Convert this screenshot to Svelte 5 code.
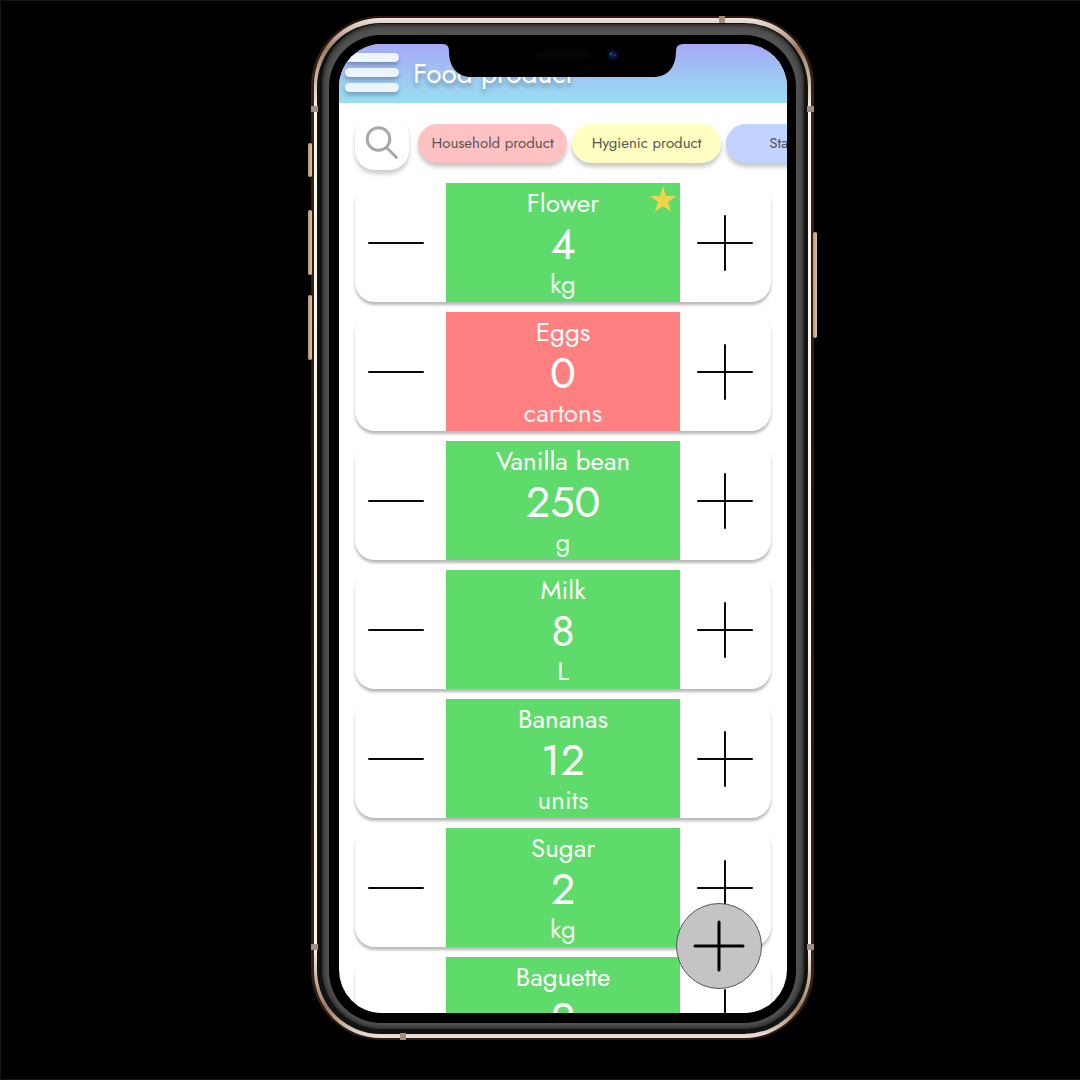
<script>
  let products = $state([
    { name: 'Flower', amount: 4, unit: 'kg', starred: true },
    { name: 'Eggs', amount: 0, unit: 'cartons' },
    { name: 'Vanilla bean', amount: 250, unit: 'g' },
    { name: 'Milk', amount: 8, unit: 'L' },
    { name: 'Bananas', amount: 12, unit: 'units' },
    { name: 'Sugar', amount: 2, unit: 'kg' },
    { name: 'Baguette', amount: 2, unit: 'units' }
  ]);

  const categories = [
    { label: 'Household product', tone: 'pink' },
    { label: 'Hygienic product', tone: 'yellow' },
    { label: 'Stationery', tone: 'blue' }
  ];
</script>

<div class="page">
  <div class="phone">
    <span class="key mute"></span>
    <span class="key up"></span>
    <span class="key down"></span>
    <span class="key power"></span>
    <div class="rim">
      <div class="edge">
        <div class="band">
          <div class="bezel">
            <main class="screen">
              <header>
                <button class="menu" aria-label="Menu"><i></i><i></i><i></i></button>
                <h1>Food product</h1>
              </header>

              <nav>
                <button class="search" aria-label="Search">
                  <svg width="36" height="36" viewBox="0 0 36 36">
                    <circle cx="14.5" cy="14" r="11.3" />
                    <path d="M22.5 22.5L32.5 32.5" />
                  </svg>
                </button>
                {#each categories as category}
                  <a href="#category" class="pill {category.tone}">{category.label}</a>
                {/each}
              </nav>

              <ul>
                {#each products as product}
                  <li>
                    <button
                      class="step minus"
                      aria-label="Remove one {product.name}"
                      onclick={() => (product.amount = Math.max(0, product.amount - 1))}
                    >
                      <svg width="58" height="58" viewBox="0 0 58 58"><path d="M2 29H56" /></svg>
                    </button>
                    <div class="info" class:empty={product.amount === 0}>
                      <h2>{product.name}</h2>
                      <strong>{product.amount}</strong>
                      <span class="unit">{product.unit}</span>
                      {#if product.starred}
                        <svg class="star" width="28" height="27" viewBox="0 0 28 27">
                          <path d="M14 0L17.1 10H27.3L19.1 16.1L22.2 26L14 19.9L5.8 26L8.9 16.1L0.7 10H10.9Z" />
                        </svg>
                      {/if}
                    </div>
                    <button class="step plus" aria-label="Add one {product.name}" onclick={() => product.amount++}>
                      <svg width="58" height="58" viewBox="0 0 58 58"><path d="M2 29H56M29 2V56" /></svg>
                    </button>
                  </li>
                {/each}
              </ul>

              <button class="add" aria-label="Add product">
                <svg width="54" height="54" viewBox="0 0 54 54"><path d="M3 27H51M27 3V51" /></svg>
              </button>

              <svg class="notch" width="240" height="34" viewBox="0 0 240 34">
                <path d="M0 0H240Q233 0 233 7C233 23 225 33 210 33H29C14 33 6 23 6 7Q6 0 0 0Z" />
                <rect class="speaker" x="93" y="7" width="54" height="8" rx="4" />
                <circle class="lens" cx="170" cy="11" r="6" />
                <circle class="glass" cx="169.5" cy="11" r="4" />
                <circle class="glint" cx="168" cy="10" r="1.5" />
                <circle class="glint" cx="171.5" cy="11" r="1" />
              </svg>
            </main>
          </div>
        </div>
      </div>
    </div>
    <span class="seam left high"></span>
    <span class="seam left low"></span>
    <span class="seam right high"></span>
    <span class="seam right low"></span>
    <span class="seam top"></span>
    <span class="seam bottom"></span>
  </div>
</div>

<style>
  :global(body) {
    background: #000;
  }

  * {
    box-sizing: border-box;
    margin: 0;
  }

  button {
    padding: 0;
    border: 0;
    background: none;
    font: inherit;
    cursor: pointer;
  }

  svg {
    display: block;
    fill: none;
    stroke-linecap: round;
  }

  .page {
    display: flex;
    justify-content: center;
    height: 100vh;
    padding: 15px 0 39px 44px;
    border: 1px solid #151515;
    border-right: 0;
    background: #000;
    font-family: Jost, Futura, Lato, sans-serif;
  }

  .phone {
    position: relative;
    display: flex;
    width: 100%;
    max-width: 503px;
    padding: 2px 3px;
    border-radius: 70px;
    background: linear-gradient(#2b1a0e, #3a2212 6%, #2b170b 50%, #3a2212 94%, #2b1a0e);
  }

  .rim,
  .edge,
  .band,
  .bezel {
    display: flex;
    flex: 1;
    min-width: 0;
  }

  .rim {
    padding: 5px 3px 4px;
    border-radius: 67px;
    background: linear-gradient(#f0e4de, #9c7b66 3%, #fff5ef 9%, #fff5ef 91%, #9c7b66 97%, #f0e4de);
  }

  .edge {
    padding: 1px 4px 5px 5px;
    border-radius: 64px;
    background: #111212;
  }

  .band {
    padding: 11px 8px 6px 7px;
    border-radius: 60px;
    background: #525252;
    box-shadow: inset 0 0 5px 1px #1c1c1c;
  }

  .bezel {
    padding: 9px 9px 10px 10px;
    border-radius: 52px;
    background: #000;
  }

  .screen {
    position: relative;
    display: flex;
    flex: 1;
    flex-direction: column;
    min-width: 0;
    overflow: hidden;
    border-radius: 43px;
    background: #fff;
  }

  header {
    display: flex;
    flex: none;
    gap: 14px;
    align-items: flex-start;
    padding: 9px 6px 8px;
    background: linear-gradient(#a6a9f7, #97dff0);
  }

  .menu {
    display: grid;
    flex: none;
    gap: 6px;
    width: 54px;
  }

  .menu i {
    height: 9px;
    border-radius: 5px;
    background: #eef4fd;
    box-shadow: 0 3px 4px rgba(0, 0, 0, 0.25);
  }

  h1 {
    color: #fff;
    font-size: 28px;
    font-weight: 400;
    line-height: 42px;
    white-space: nowrap;
    text-shadow: 0 4px 4px rgba(0, 0, 0, 0.25);
  }

  nav {
    display: flex;
    flex: none;
    gap: 5px;
    align-items: center;
    padding: 13px 0 13px 16px;
    overflow: hidden;
  }

  .search {
    display: flex;
    flex: none;
    align-items: center;
    justify-content: center;
    width: 54px;
    height: 54px;
    margin-right: 4px;
    border-radius: 20px;
    background: #fff;
    box-shadow: 0 4px 4px rgba(0, 0, 0, 0.2);
  }

  .search path,
  .search circle {
    stroke: #a9a9a9;
    stroke-width: 3;
  }

  .pill {
    flex: none;
    width: 149px;
    border-radius: 20px;
    color: #555;
    font-size: 15px;
    line-height: 39px;
    text-align: center;
    text-decoration: none;
    box-shadow: 0 4px 4px rgba(0, 0, 0, 0.22);
  }

  .pink {
    background: #ffc1c2;
  }

  .yellow {
    background: #feffc1;
  }

  .blue {
    background: #c2d3ff;
  }

  ul {
    display: flex;
    flex: 1;
    flex-direction: column;
    gap: 10px;
    min-height: 0;
    padding: 0 16px;
    overflow: hidden;
    list-style: none;
  }

  li {
    display: flex;
    flex: none;
    border-radius: 20px;
    background: #fff;
    box-shadow: 0 3px 3px rgba(0, 0, 0, 0.28);
  }

  .step {
    display: flex;
    flex: 1;
    align-items: center;
    justify-content: center;
  }

  .minus svg {
    margin-right: 10px;
  }

  .plus svg {
    margin-right: 2px;
  }

  .step path {
    stroke: #0a0a0a;
    stroke-width: 2;
  }

  .info {
    position: relative;
    display: flex;
    flex: none;
    flex-direction: column;
    width: 234px;
    padding: 2px 0 1px;
    background: #5edb6a;
    color: #fff;
    text-align: center;
  }

  .empty {
    background: #ff8080;
  }

  h2,
  .unit {
    font-size: 26px;
    font-weight: 400;
  }

  h2 {
    line-height: 36px;
  }

  .unit {
    line-height: 34px;
    opacity: 0.9;
  }

  strong {
    font-size: 43px;
    font-weight: 400;
    line-height: 46px;
  }

  .star {
    position: absolute;
    top: 3px;
    right: 3px;
    fill: #ecd54b;
  }

  .add {
    position: absolute;
    right: 25px;
    bottom: 24px;
    display: flex;
    align-items: center;
    justify-content: center;
    width: 86px;
    height: 86px;
    border: 1px solid #555;
    border-radius: 50%;
    background: #c4c4c4;
  }

  .add path {
    stroke: #000;
    stroke-width: 3;
  }

  .notch {
    position: absolute;
    top: 0;
    left: calc(50% - 120px);
    fill: #000;
  }

  .speaker {
    fill: #060606;
  }

  .lens {
    fill: #0b0c10;
  }

  .glass {
    fill: #04143a;
  }

  .glint {
    fill: #1450a0;
  }

  .key {
    position: absolute;
    left: -3px;
    width: 4px;
    border-radius: 2px;
    background: linear-gradient(90deg, #b89878, #dcc0a2);
  }

  .mute {
    top: 127px;
    height: 34px;
  }

  .up {
    top: 194px;
    height: 65px;
  }

  .down {
    top: 279px;
    height: 65px;
  }

  .power {
    top: 216px;
    right: -3px;
    left: auto;
    height: 106px;
  }

  .seam {
    position: absolute;
    background: #a48c7e;
  }

  .left,
  .right {
    width: 7px;
    height: 6px;
  }

  .left {
    left: 0;
  }

  .right {
    right: 0;
  }

  .high {
    top: 90px;
  }

  .low {
    bottom: 90px;
  }

  .top,
  .bottom {
    width: 6px;
    height: 7px;
  }

  .top {
    top: 0;
    right: 89px;
  }

  .bottom {
    bottom: 0;
    left: 89px;
  }
</style>
